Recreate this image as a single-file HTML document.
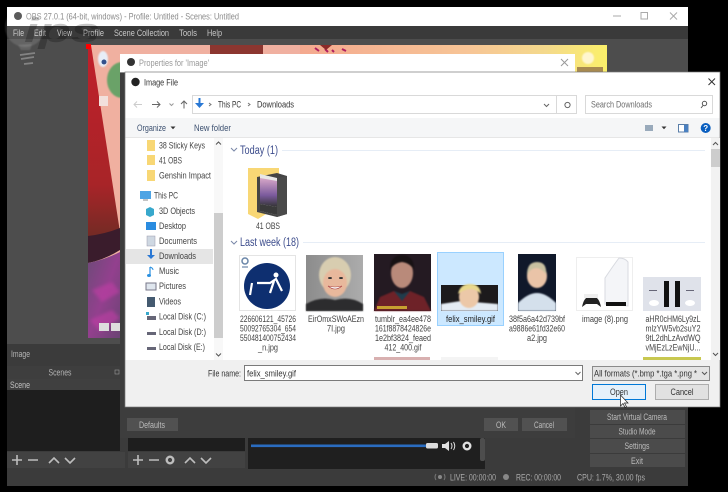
<!DOCTYPE html>
<html><head><meta charset="utf-8"><title>OBS</title>
<style>
html,body{margin:0;padding:0;background:#000;width:728px;height:492px;overflow:hidden}
svg{display:block;filter:blur(.35px)}
text{font-family:"Liberation Sans",sans-serif;font-size:9px;fill:#333}
.w{fill:#c8c8c8}
.m{text-anchor:middle}
.l{font-size:8.800px;fill:#444;text-anchor:middle}
.n{font-size:9.200px;fill:#444}
.g{font-size:11.500px;fill:#3c4c8c}
.b{fill:#bbb;text-anchor:middle}
.s{fill:#aaa}
.wi{fill:none;stroke:#bdbdbd;stroke-width:1.600}
.soft{filter:blur(.8px)}
.soft2{filter:blur(1.600px)}
</style></head><body>
<svg width="728" height="492" viewBox="0 0 728 492" xmlns="http://www.w3.org/2000/svg" lengthAdjust="spacingAndGlyphs">
<defs>
<linearGradient id="gy" x1="0" x2="1"><stop offset="0" stop-color="#f4a98f"/><stop offset=".55" stop-color="#f7c596"/><stop offset=".8" stop-color="#f4d98c"/><stop offset="1" stop-color="#fbf06a"/></linearGradient>
<linearGradient id="red" x1="0" x2="0" y1="0" y2="1"><stop offset="0" stop-color="#c0202a"/><stop offset=".7" stop-color="#a82428"/><stop offset="1" stop-color="#6a2c24"/></linearGradient>
<linearGradient id="pur" x1="0" x2="1" y1="0" y2="1"><stop offset="0" stop-color="#6d4a78"/><stop offset=".5" stop-color="#93408e"/><stop offset="1" stop-color="#6a4474"/></linearGradient>
<linearGradient id="pho" x1="0" x2="1"><stop offset="0" stop-color="#8c8c8c"/><stop offset="1" stop-color="#acacac"/></linearGradient>
<linearGradient id="pg" x1="0" x2="0" y1="0" y2="1"><stop offset="0" stop-color="#d8a8c8"/><stop offset=".6" stop-color="#7a5a9c"/><stop offset="1" stop-color="#333"/></linearGradient>
</defs>

<!-- OBS window -->
<rect x="7" y="7" width="681" height="479" fill="#3b3b3b"/>
<rect x="7" y="7" width="681" height="19" fill="#fff"/>
<rect x="7" y="26" width="681" height="13" fill="#3a3a3a"/>
<rect x="7" y="39" width="681" height="305" fill="#4d4d4d"/>
<circle cx="18" cy="16" r="4" fill="#444"/>
<text x="26" y="19.500" style="fill:#8c8c8c" textLength="213" lengthAdjust="spacingAndGlyphs">OBS 27.0.1 (64-bit, windows) - Profile: Untitled - Scenes: Untitled</text>
<path d="M613 16h8" stroke="#aaa"/><rect x="641" y="12.500" width="6.500" height="6.500" fill="none" stroke="#aaa"/><path d="M670 12.500l7 7m0-7l-7 7" stroke="#aaa"/>
<text class="w" x="13" y="36" textLength="11" lengthAdjust="spacingAndGlyphs">File</text>
<text class="w" x="34" y="36" textLength="12" lengthAdjust="spacingAndGlyphs">Edit</text>
<text class="w" x="57" y="36" textLength="15" lengthAdjust="spacingAndGlyphs">View</text>
<text class="w" x="83" y="36" textLength="21" lengthAdjust="spacingAndGlyphs">Profile</text>
<text class="w" x="114" y="36" textLength="55" lengthAdjust="spacingAndGlyphs">Scene Collection</text>
<text class="w" x="179" y="36" textLength="18" lengthAdjust="spacingAndGlyphs">Tools</text>
<text class="w" x="207" y="36" textLength="15" lengthAdjust="spacingAndGlyphs">Help</text>

<!-- preview art -->
<rect x="88" y="45" width="519" height="293" fill="#f0b0a0"/>
<rect x="300" y="45" width="307" height="30" fill="url(#gy)"/>
<rect x="210" y="45" width="53" height="10" fill="#8c3630"/>
<path d="M88 45L91 45L120 232L120 245L88 245Z" fill="url(#red)"/>
<path d="M88 236Q105 234 120 228V250Q104 260 88 263Z" fill="#3a1c2c"/>
<path d="M88 263Q104 260 120 252V338H88Z" fill="url(#pur)"/>
<path class="soft2" d="M92 290l20-8 8 10-18 10zM90 320l22-10 8 8-20 14z" fill="#c23ea6" opacity=".6"/>
<rect x="86" y="44" width="5" height="5" fill="#f00"/>
<ellipse class="soft" cx="122" cy="80" rx="15" ry="18" fill="#6aa268"/>
<ellipse class="soft" cx="103" cy="59" rx="5" ry="8" fill="#e8eef8"/><circle cx="104" cy="62" r="2.500" fill="#34508c"/>
<rect x="99" y="96" width="9" height="10" fill="#f2e0dc"/>
<rect x="99" y="323" width="10" height="8" fill="#ddd"/><rect x="111" y="323" width="9" height="8" fill="#ddd"/>
<path d="M315 48l4 3m6-2l3 3m4-2l2 2m8-3l4 2" stroke="#b02060" stroke-width="2"/>
<path d="M320 45h12l-6 5z" fill="#8c2a28"/>
<circle class="soft" cx="588" cy="58" r="6" fill="#fff6d0"/><rect x="577" y="67" width="26" height="5" fill="#a88a50"/>

<!-- Properties dialog -->
<rect x="120" y="54" width="455" height="384" fill="#3d3d3d"/>
<rect x="120" y="54" width="455" height="18" fill="#fff"/>
<rect x="120" y="72" width="455" height="1" fill="#8c8c8c"/>
<circle cx="131" cy="62" r="4" fill="#333"/>
<text x="139" y="66" style="fill:#999" textLength="70" lengthAdjust="spacingAndGlyphs">Properties for 'Image'</text>
<path d="M561 59l7 7m0-7l-7 7" stroke="#999"/>
<rect x="127" y="418" width="51" height="13" fill="#515151"/><text x="152" y="428" class="b" textLength="26" lengthAdjust="spacingAndGlyphs">Defaults</text>
<rect x="484" y="418" width="34" height="13" fill="#515151"/><text x="501" y="428" class="b" textLength="10" lengthAdjust="spacingAndGlyphs">OK</text>
<rect x="522" y="418" width="45" height="13" fill="#515151"/><text x="544" y="428" class="b" textLength="20" lengthAdjust="spacingAndGlyphs">Cancel</text>

<!-- Bottom OBS panels -->
<text x="11" y="357" style="fill:#b4b4b4" textLength="19" lengthAdjust="spacingAndGlyphs">Image</text>
<rect x="7" y="366" width="113" height="13" fill="#3e3e3e"/>
<text x="60" y="375.500" class="m" style="fill:#b4b4b4" textLength="23" lengthAdjust="spacingAndGlyphs">Scenes</text>
<rect x="115" y="370" width="4" height="4" fill="none" stroke="#999" stroke-width=".6"/>
<rect x="7" y="379" width="113" height="72" fill="#1e1e1e"/>
<rect x="7" y="379" width="113" height="11" fill="#404040"/>
<text x="10" y="388" style="fill:#c0c0c0" textLength="20" lengthAdjust="spacingAndGlyphs">Scene</text>
<rect x="7" y="452" width="118" height="16" fill="#424242"/>
<rect x="128" y="438" width="117" height="13" fill="#1e1e1e"/>
<rect x="128" y="452" width="117" height="16" fill="#424242"/>
<g class="wi">
<path d="M12 460h10M17 455v10M28 460h10M49 463l5-5 5 5M65 458l5 5 5-5"/>
<path d="M133 460h10M138 455v10M149 460h10M185 463l5-5 5 5M201 458l5 5 5-5"/>
</g>
<circle cx="170" cy="460" r="3.300" fill="none" stroke="#bdbdbd" stroke-width="2.400"/>
<rect x="248" y="438" width="237" height="31" fill="#1f1f1f"/>
<rect x="480" y="438" width="5" height="23" rx="2" fill="#4d4d4d"/>
<rect x="251" y="444.500" width="176" height="2.600" fill="#2a6cc0"/>
<rect x="426" y="443" width="12" height="5.500" rx="1.500" fill="#dcdcdc"/>
<path d="M442 444h3l4-3v10l-4-3h-3z" fill="#e0e0e0"/><path d="M451 443q2 3 0 6M453.500 442q2.500 4 0 8" fill="none" stroke="#ddd"/>
<circle cx="467" cy="446" r="3.300" fill="none" stroke="#e0e0e0" stroke-width="2.400"/>

<rect x="590" y="410" width="95" height="14" fill="#4b4b4b"/><text x="637" y="420" class="b" textLength="60" lengthAdjust="spacingAndGlyphs">Start Virtual Camera</text>
<rect x="590" y="425" width="95" height="13" fill="#4b4b4b"/><text x="637" y="434.500" class="b" textLength="37" lengthAdjust="spacingAndGlyphs">Studio Mode</text>
<rect x="590" y="439" width="95" height="14" fill="#4b4b4b"/><text x="637" y="449" class="b" textLength="25" lengthAdjust="spacingAndGlyphs">Settings</text>
<rect x="590" y="454" width="95" height="13" fill="#4b4b4b"/><text x="637" y="464" class="b" textLength="12" lengthAdjust="spacingAndGlyphs">Exit</text>

<circle cx="440" cy="477" r="2" fill="#888"/><path d="M436 474q-2 3 0 6M444 474q2 3 0 6" fill="none" stroke="#777"/>
<text class="s" x="450" y="480.500" textLength="46" lengthAdjust="spacingAndGlyphs">LIVE: 00:00:00</text>
<circle cx="506" cy="477" r="3" fill="#888"/>
<text class="s" x="516" y="480.500" textLength="45" lengthAdjust="spacingAndGlyphs">REC: 00:00:00</text>
<text class="s" x="577" y="480.500" textLength="68" lengthAdjust="spacingAndGlyphs">CPU: 1.7%, 30.00 fps</text>

<!-- Image File dialog -->
<rect x="125" y="72" width="595" height="335" fill="#fff"/>
<rect x="125" y="72" width="595" height="335" fill="none" stroke="#777" stroke-width=".7"/>
<circle cx="135.500" cy="82" r="4.200" fill="#222"/>
<text x="144" y="85.500" textLength="34" lengthAdjust="spacingAndGlyphs">Image File</text>
<path d="M708.500 78.500l6.500 6.500m0-6.500l-6.500 6.500" stroke="#333" stroke-width="1"/>
<!-- nav -->
<path d="M134 104.500h8M137 101.500l-3 3 3 3" fill="none" stroke="#ccc"/>
<path d="M152 104.500h8M157 101.500l3 3-3 3" fill="none" stroke="#666"/>
<path d="M169.500 103.500l2 2 2-2" fill="none" stroke="#999"/>
<path d="M184 108.500v-7M181 104l3-3 3 3" fill="none" stroke="#666"/>
<rect x="192.500" y="95.500" width="384" height="18" fill="#fff" stroke="#d9d9d9"/>
<path d="M556.500 95.500v18" stroke="#d9d9d9"/>
<path d="M198.500 98v5H195l4.500 5 4.500-5h-3.500v-5z" fill="#2a78d4"/>
<path d="M209 103l2 1.500-2 1.500M248 103l2 1.500-2 1.500" fill="none" stroke="#777"/>
<text x="218" y="107.500" textLength="23" lengthAdjust="spacingAndGlyphs">This PC</text>
<text x="257" y="107.500" textLength="37" lengthAdjust="spacingAndGlyphs">Downloads</text>
<path d="M544 104l2.500 2.500 2.500-2.500" fill="none" stroke="#666"/>
<circle cx="567.500" cy="105" r="2.600" fill="none" stroke="#666"/>
<rect x="585.500" y="95.500" width="127" height="18" fill="#fff" stroke="#d9d9d9"/>
<text x="591" y="107.500" style="fill:#6d6d6d" textLength="61" lengthAdjust="spacingAndGlyphs">Search Downloads</text>
<circle cx="704.500" cy="103.500" r="2.200" fill="none" stroke="#555"/><path d="M703 105.500l-2 2.500" stroke="#555"/>
<!-- toolbar -->
<rect x="125.500" y="118" width="594" height="19" fill="#f5f6f7"/>
<path d="M125.500 137.500h594" stroke="#e6e6e6"/>
<text x="137" y="131" style="fill:#3c5070" textLength="29" lengthAdjust="spacingAndGlyphs">Organize</text>
<path d="M170.500 126.500h5l-2.500 2.800z" fill="#333"/>
<text x="194" y="131" style="fill:#3c5070" textLength="37" lengthAdjust="spacingAndGlyphs">New folder</text>
<rect x="645" y="125" width="8" height="6" fill="#9ab"/>
<path d="M661.500 126.500h5l-2.500 2.800z" fill="#333"/>
<rect x="678.500" y="124.500" width="9.500" height="7.500" fill="#fff" stroke="#5a7ea8"/><rect x="684" y="125" width="4" height="7" fill="#4a80c0"/>
<circle cx="705.700" cy="128" r="5" fill="#0a5fc0"/>
<text x="705.700" y="131" class="m" style="fill:#fff;font-size:8px;font-weight:bold">?</text>
<!-- nav pane -->
<rect x="214" y="138" width="9" height="222" fill="#f8f8f8"/>
<rect x="214" y="213" width="9" height="125" fill="#cdcdcd"/>
<path d="M216 144.500l2.500-2.500 2.500 2.500M216 353.500l2.500 2.500 2.500-2.500" fill="none" stroke="#555"/>
<rect x="126" y="249" width="87" height="15" fill="#e5e5e5"/>
<g fill="#f8d775">
<rect x="147" y="140" width="8" height="11"/><rect x="147" y="155" width="8" height="10"/><rect x="147" y="170" width="8" height="11"/>
</g>
<rect x="140" y="191" width="11" height="8" fill="#4ea4e4"/><rect x="143" y="199.500" width="5" height="1" fill="#888"/>
<path d="M146 209l4-2 4 2v6l-4 2-4-2z" fill="#38a8cc"/>
<rect x="146" y="222" width="10" height="8" fill="#2a8ce0"/>
<rect x="147" y="236" width="8" height="10" fill="#cfd8e2" stroke="#99a" stroke-width=".5"/>
<path d="M150 249v6h-3l4 4 4-4h-3v-6z" fill="#2a78d4"/>
<path d="M150 267v8" stroke="#2a90e0" stroke-width="1.200"/><ellipse cx="149" cy="275.500" rx="2" ry="1.500" fill="#2a90e0"/><path d="M150 267q3 1 3 3" fill="none" stroke="#2a90e0"/>
<rect x="146" y="283" width="10" height="7" fill="#dfe6ee" stroke="#778"/>
<rect x="147" y="297" width="8" height="10" fill="#445a70"/>
<rect x="147" y="316" width="9" height="4" fill="#667"/><rect x="146" y="312" width="3" height="3" fill="#38a8cc"/>
<rect x="147" y="332" width="9" height="3" fill="#667"/><rect x="147" y="347" width="9" height="3" fill="#667"/>
<text class="n" x="159" y="148.500" textLength="46" lengthAdjust="spacingAndGlyphs">38 Sticky Keys</text>
<text class="n" x="159" y="163.500" textLength="23" lengthAdjust="spacingAndGlyphs">41 OBS</text>
<text class="n" x="159" y="178.500" textLength="52" lengthAdjust="spacingAndGlyphs">Genshin Impact</text>
<text class="n" x="154" y="198.500" textLength="24" lengthAdjust="spacingAndGlyphs">This PC</text>
<text class="n" x="159" y="214" textLength="36" lengthAdjust="spacingAndGlyphs">3D Objects</text>
<text class="n" x="159" y="229" textLength="27" lengthAdjust="spacingAndGlyphs">Desktop</text>
<text class="n" x="159" y="244" textLength="38" lengthAdjust="spacingAndGlyphs">Documents</text>
<text class="n" x="159" y="259" textLength="37" lengthAdjust="spacingAndGlyphs">Downloads</text>
<text class="n" x="159" y="274" textLength="20" lengthAdjust="spacingAndGlyphs">Music</text>
<text class="n" x="159" y="289" textLength="27" lengthAdjust="spacingAndGlyphs">Pictures</text>
<text class="n" x="159" y="304.500" textLength="22" lengthAdjust="spacingAndGlyphs">Videos</text>
<text class="n" x="159" y="319.500" textLength="47" lengthAdjust="spacingAndGlyphs">Local Disk (C:)</text>
<text class="n" x="159" y="335" textLength="47" lengthAdjust="spacingAndGlyphs">Local Disk (D:)</text>
<text class="n" x="159" y="350" textLength="46" lengthAdjust="spacingAndGlyphs">Local Disk (E:)</text>
<!-- content -->
<rect x="711" y="138" width="9" height="222" fill="#f2f2f2"/>
<rect x="711" y="149" width="9" height="18" fill="#cdcdcd"/>
<path d="M713 145l2.500-2.500 2.500 2.500M713 353l2.500 2.500 2.500-2.500" fill="none" stroke="#555"/>
<path d="M231 148l3 3 3-3M231 241l3 3 3-3" fill="none" stroke="#7a88a8"/>
<text class="g" x="240" y="154" textLength="38" lengthAdjust="spacingAndGlyphs">Today (1)</text>
<text class="g" x="240" y="246" textLength="59" lengthAdjust="spacingAndGlyphs">Last week (18)</text>
<path d="M282 150.500h423M303 242.500h402" stroke="#e6edf6"/>
<!-- folder -->
<path d="M248 168h31v38l-21 13-10-5z" fill="#f8d775"/>
<path d="M257 177l20-4 10 3v38l-10 3-20-5z" fill="#444"/>
<path d="M260 174l17 4v37l-17-4z" fill="#e8e8e8"/>
<path d="M260 178l17 3v26l-17-3z" fill="url(#pg)"/>
<path d="M260 204l17 3v8l-17-4z" fill="#3a3a3a"/>
<path d="M277 178l10-2v38l-10 3z" fill="#4a4a4a"/>
<text class="l" x="268" y="229" textLength="24" lengthAdjust="spacingAndGlyphs">41 OBS</text>
<!-- thumbs -->
<rect x="239.500" y="255.500" width="56" height="55" fill="#fff" stroke="#e4e4e4"/>
<circle cx="267" cy="286" r="23" fill="#0e2f70"/>
<circle cx="245" cy="261" r="3" fill="none" stroke="#6a86a8" stroke-width="1.500"/><path d="M242 267h6" stroke="#6a86a8" stroke-width="1.200"/>
<path d="M257 283h13l6-4 6 12M274 281l-4 12M252 283l-2 12" fill="none" stroke="#fff" stroke-width="2.200"/><circle cx="276" cy="275" r="2.500" fill="#fff"/>

<rect x="306" y="255" width="57" height="56" fill="url(#pho)"/>
<g class="soft">
<ellipse cx="335" cy="275" rx="16" ry="18" fill="#d8cdb0"/>
<ellipse cx="335" cy="283" rx="12" ry="14" fill="#e8b89c"/>
<path d="M306 311v-7q14-8 29-4 16-4 28 4v7z" fill="#2c2c2e"/>
</g>
<ellipse cx="330" cy="278" rx="2" ry="1" fill="#333"/><ellipse cx="341" cy="278" rx="2" ry="1" fill="#333"/>
<path d="M328 286q7 6 14 0q-7 2-14 0z" fill="#fff" stroke="#a44" stroke-width=".6"/>

<rect x="374" y="254" width="57" height="57" fill="#241a22"/>
<g class="soft">
<ellipse cx="402" cy="273" rx="11" ry="15" fill="#b98a7a"/>
<path d="M390 270q0-15 12-15t12 15q-4-7-12-8-8 1-12 8z" fill="#181214"/>
<path d="M374 311l6-14 14-6 8 8 8-8 14 6 7 14z" fill="#6e2228"/>
<path d="M394 291l8 10 8-10-8 3z" fill="#1f3c4c"/>
</g>
<rect x="377" y="306" width="30" height="3" fill="#c8a030"/>

<rect x="437.500" y="252.500" width="66" height="73" fill="#cce8ff" stroke="#99d1ff"/>
<rect x="441" y="285" width="57" height="26" fill="#1c1a1c"/>
<g class="soft">
<path d="M441 311v-7l20-3 37 3v7z" fill="#e4ecf4"/>
<ellipse cx="469" cy="297" rx="10" ry="11" fill="#ecc8a8"/>
<path d="M458 294q2-10 12-10t11 10q-6-6-12-5t-11 5z" fill="#e8d88c"/>
</g>
<text class="l" x="470.500" y="322" style="fill:#222" textLength="49" lengthAdjust="spacingAndGlyphs">felix_smiley.gif</text>

<rect x="518" y="254" width="38" height="57" fill="#10182a"/>
<g class="soft">
<ellipse cx="537" cy="276" rx="10" ry="12" fill="#eac4a8"/>
<path d="M527 275q0-13 10-13t9 12q-5-6-10-6t-9 7z" fill="#c8c0a0"/>
<path d="M518 311v-8q10-10 19-10t19 10v8z" fill="#d4e0ec"/>
</g>

<rect x="576.500" y="257.500" width="56" height="53" fill="#fff" stroke="#eee"/>
<path d="M605 278q8-12 14-20 6 0 9 4v44l-23-2z" fill="#f4f5f8" stroke="#d8dae0"/>
<rect x="606" y="302" width="20" height="4" fill="#111"/>
<path d="M582 307q2-10 7-10h5q5 0 7 10l-4-3h-11z" fill="#222"/>
<rect x="584" y="294" width="14" height="4" fill="#eee"/>

<rect x="643" y="277" width="58" height="34" fill="#dfe2ea"/>
<rect x="664" y="281" width="5" height="26" fill="#111"/><rect x="675" y="281" width="5" height="26" fill="#111"/>
<ellipse cx="654" cy="303" rx="5" ry="3" fill="#fff"/><ellipse cx="690" cy="303" rx="5" ry="3" fill="#fff"/>
<rect x="649" y="290" width="8" height="1" fill="#667"/><rect x="686" y="290" width="8" height="1" fill="#667"/>

<rect x="374" y="357" width="56" height="3" fill="#d8b0b0"/>
<rect x="441" y="357" width="57" height="3" fill="#f4f4f4"/>
<rect x="643" y="357" width="58" height="3" fill="#c8c850"/>

<text class="l" x="268" y="322" textLength="56" lengthAdjust="spacingAndGlyphs">226606121_45726</text>
<text class="l" x="268" y="331.500" textLength="56" lengthAdjust="spacingAndGlyphs">50092765304_654</text>
<text class="l" x="268" y="341" textLength="56" lengthAdjust="spacingAndGlyphs">550481400752434</text>
<text class="l" x="268" y="350.500" textLength="20" lengthAdjust="spacingAndGlyphs">_n.jpg</text>
<text class="l" x="336" y="322" textLength="56" lengthAdjust="spacingAndGlyphs">EirOmxSWoAEzn</text>
<text class="l" x="336" y="331.500" textLength="18" lengthAdjust="spacingAndGlyphs">7I.jpg</text>
<text class="l" x="403" y="322" textLength="56" lengthAdjust="spacingAndGlyphs">tumblr_ea4ee478</text>
<text class="l" x="403" y="331.500" textLength="56" lengthAdjust="spacingAndGlyphs">161f8878424826e</text>
<text class="l" x="403" y="341" textLength="56" lengthAdjust="spacingAndGlyphs">1e2bf3824_feaed</text>
<text class="l" x="403" y="350.500" textLength="37" lengthAdjust="spacingAndGlyphs">412_400.gif</text>
<text class="l" x="537" y="322" textLength="56" lengthAdjust="spacingAndGlyphs">38f5a6a42d739bf</text>
<text class="l" x="537" y="331.500" textLength="56" lengthAdjust="spacingAndGlyphs">a9886e61fd32e60</text>
<text class="l" x="537" y="341" textLength="20" lengthAdjust="spacingAndGlyphs">a2.jpg</text>
<text class="l" x="605" y="322" textLength="46" lengthAdjust="spacingAndGlyphs">image (8).png</text>
<text class="l" x="673" y="322" textLength="55" lengthAdjust="spacingAndGlyphs">aHR0cHM6Ly9zL</text>
<text class="l" x="673" y="331.500" textLength="55" lengthAdjust="spacingAndGlyphs">mlzYW5vb2suY2</text>
<text class="l" x="673" y="341" textLength="55" lengthAdjust="spacingAndGlyphs">9tL2dhLzAvdWQ</text>
<text class="l" x="673" y="350.500" textLength="55" lengthAdjust="spacingAndGlyphs">vMjEzLzEwNjU...</text>
<!-- bottom -->
<rect x="125.500" y="360" width="594" height="46.500" fill="#f0f0f0"/>
<text x="208" y="376.500" textLength="33" lengthAdjust="spacingAndGlyphs">File name:</text>
<rect x="244.500" y="365.500" width="338" height="15" fill="#fff" stroke="#7a7a7a"/>
<text x="247" y="376.500" textLength="49" lengthAdjust="spacingAndGlyphs">felix_smiley.gif</text>
<path d="M575.500 372l2.500 2.500 2.500-2.500" fill="none" stroke="#666"/>
<rect x="592.500" y="366.500" width="117" height="14" fill="#e3e3e3" stroke="#8a8a8a"/>
<text x="594" y="376.500" textLength="103" lengthAdjust="spacingAndGlyphs">All formats (*.bmp *.tga *.png *</text>
<path d="M702 372l2.500 2.500 2.500-2.500" fill="none" stroke="#555"/>
<rect x="592.500" y="384.500" width="53" height="15" fill="#e5f1fb" stroke="#0078d7"/>
<text x="619" y="395" class="m" textLength="18" lengthAdjust="spacingAndGlyphs">Open</text>
<rect x="655.500" y="384.500" width="53" height="15" fill="#e1e1e1" stroke="#adadad"/>
<text x="682" y="395" class="m" textLength="23" lengthAdjust="spacingAndGlyphs">Cancel</text>
<path d="M620.500 395v11l2.500-2.500 2 4 1.500-.8-2-3.700h3.500z" fill="#fff" stroke="#222" stroke-width=".7"/>

<!-- watermark -->
<circle class="soft" cx="25" cy="27" r="20" fill="#fff" opacity=".12"/>
<path class="soft" d="M18 45l14-1-2 6h-9z" fill="#fff" opacity=".12"/>
<path d="M20 55l15-2M21 59l13-2M24 64l9-1" stroke="#fff" stroke-width="1.800" opacity=".3"/>
<text x="24" y="42" textLength="76" lengthAdjust="spacingAndGlyphs" style="fill:#000;opacity:.22;font-size:34px;font-weight:bold;font-style:italic">ips</text>
</svg>
</body></html>
